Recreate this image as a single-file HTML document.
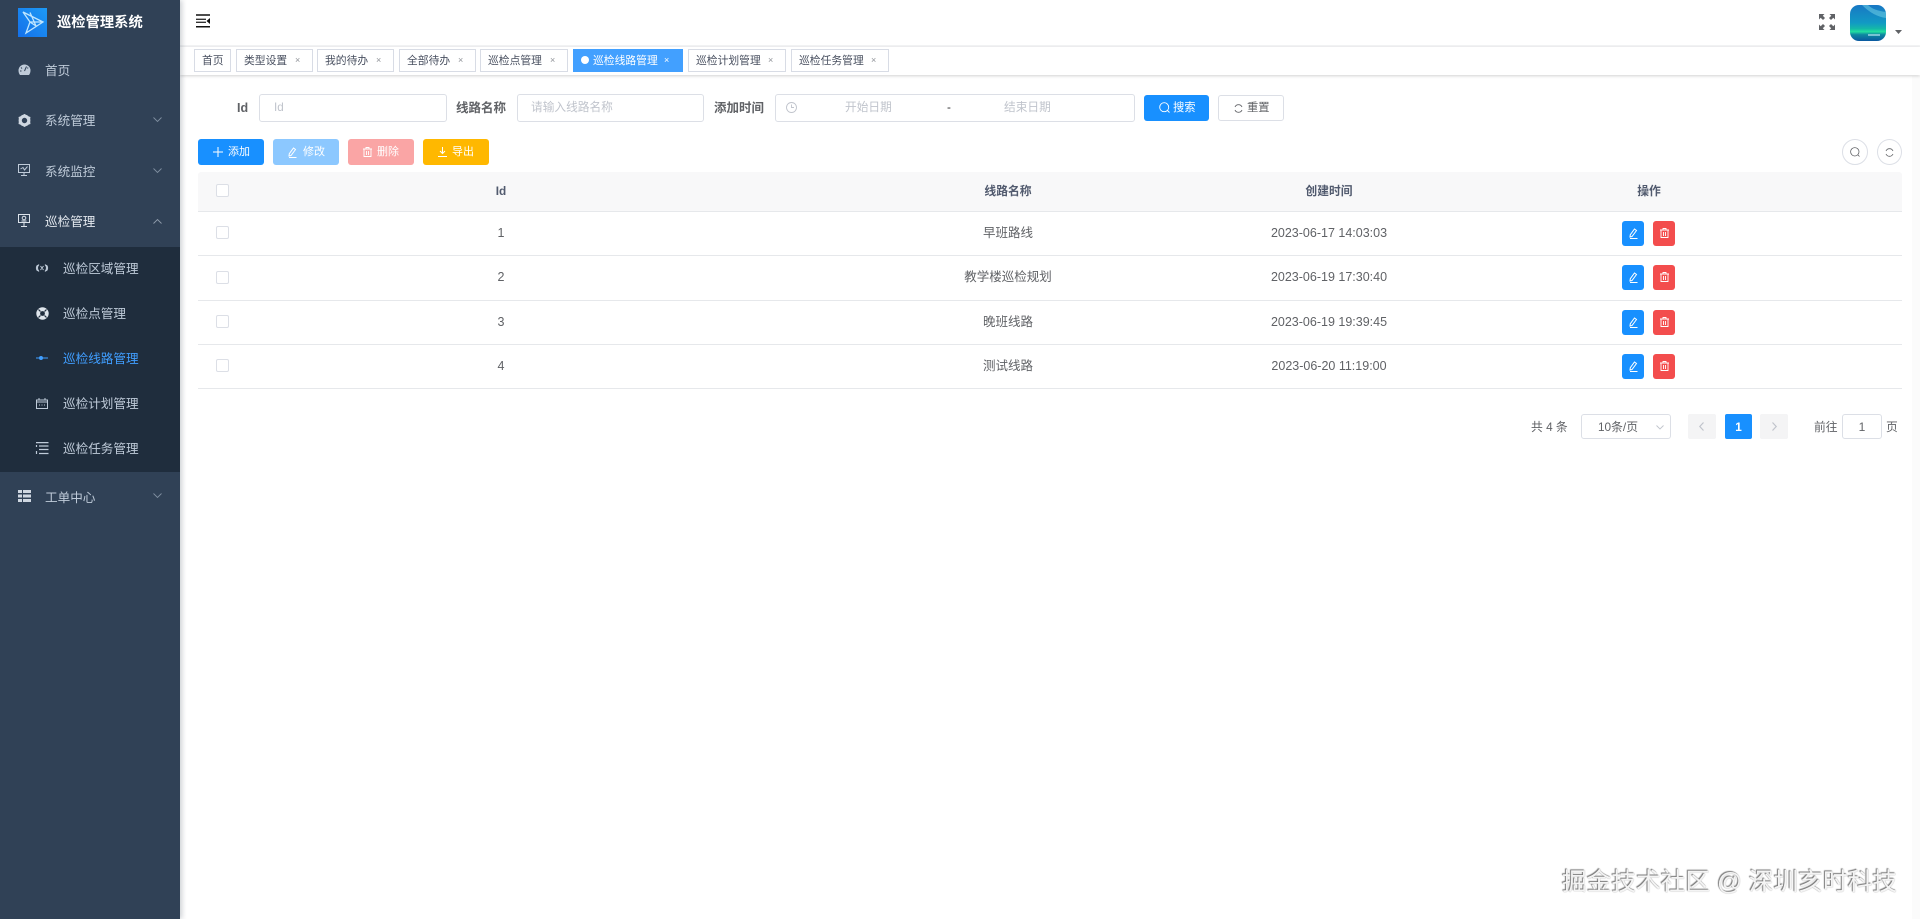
<!DOCTYPE html>
<html lang="zh-CN"><head><meta charset="utf-8"><title>巡检管理系统</title>
<style>
*{box-sizing:border-box}
html,body{margin:0;padding:0;width:1920px;height:919px;overflow:hidden;background:#fff;font-family:"Liberation Sans","Noto Sans CJK SC",sans-serif;color:#606266}
#w{position:absolute;left:0;top:0;width:1920px;height:919px;overflow:hidden;filter:blur(.35px)}
.a{position:absolute;white-space:nowrap}
svg{position:absolute;display:block;fill:none;overflow:visible}
.m{font-size:12.6px;color:#bfcbd9;left:45px;line-height:20px;height:20px;margin-top:1px}
.s{font-size:12.6px;color:#bfcbd9;left:63px;line-height:20px;height:20px;margin-top:1px}
.tag{top:49px;height:23px;border:1px solid #d8dce5;background:#fff;font-size:10.8px;line-height:23px;color:#495060;padding-left:7px}
.tag i{position:absolute;top:-1px;font-style:normal;font-size:9px;color:#909399}
.lb{top:98px;font-size:12.5px;font-weight:700;color:#606266;line-height:20px}
.in{top:94px;height:28px;border:1px solid #dcdfe6;border-radius:3px;background:#fff}
.ph{top:98px;font-size:11.7px;line-height:20px;color:#c0c4cc}
.btn{top:139px;width:66px;height:26px;border-radius:3px;color:#fff;font-size:11px;line-height:27px;padding-left:30px}
.th{top:181px;font-size:11.8px;line-height:20px;font-weight:700;color:#515a6e;text-align:center}
.td{font-size:12.5px;line-height:20px;color:#606266;text-align:center}
.ln{left:198px;width:1704px;height:1px;background:#e6e8eb}
.cb{left:216px;width:13px;height:13px;border:1px solid #dcdfe6;border-radius:2px;background:#fff}
.eb{left:1622px;width:22px;height:25px;border-radius:3px;background:#1890ff}
.db{left:1653px;width:22px;height:25px;border-radius:3px;background:#f34d4d}
.pg{font-size:11.8px;line-height:20px;color:#606266;top:417px}
</style></head><body><div id="w">

<div class="a" style="left:1912px;top:76px;width:8px;height:843px;background:#fbfbfb"></div>
<div class="a" style="left:180px;top:45px;width:1740px;height:2px;background:#f3f4f5"></div>
<div class="a" style="left:180px;top:47px;width:1740px;height:28px;background:#fff;box-shadow:0 1px 3px rgba(0,0,0,.18)"></div>

<div class="a" style="left:0;top:0;width:180px;height:919px;background:#304156;box-shadow:2px 0 5px rgba(0,21,41,.2)"></div>
<div class="a" style="left:0;top:247px;width:180px;height:225px;background:#1f2d3d"></div>

<div class="a" style="left:18px;top:8px;width:29px;height:29px;background:linear-gradient(45deg,#1470ea,#1d9af5)"></div>
<svg style="left:18px;top:8px" width="29" height="29" viewBox="0 0 29 29" stroke="#bfe6ff" stroke-width="1.300"><path d="M5 4L25 14L8 25L12 14ZM5 4L12 14L25 14M12 4.500L18 18M12 14L18 18"/></svg>
<div class="a" style="left:57px;top:13px;font-size:14.3px;font-weight:700;color:#fff;line-height:20px">巡检管理系统</div>

<svg style="left:18px;top:64px" width="13" height="12" viewBox="0 0 13 12"><path d="M6.500.5A6 6 0 0 0 .5 6.500C.5 8.500 1.200 10 2 11H11C11.800 10 12.500 8.500 12.500 6.500A6 6 0 0 0 6.500.5Z" fill="#bfcbd9"/><path d="M6.500 7L8.500 2.500M3 3.500L4 4.500M2 7H3.500M10 3.500L9.500 4.500" stroke="#304156"/></svg>
<div class="a m" style="top:60px">首页</div>

<svg style="left:18px;top:114px" width="13" height="13" viewBox="0 0 13 13"><circle cx="6.500" cy="6.500" r="4.300" stroke="#cfd7e1" stroke-width="3.200"/><circle cx="6.500" cy="1.200" r="1.200" fill="#cfd7e1"/><circle cx="6.500" cy="11.800" r="1.200" fill="#cfd7e1"/><circle cx="1.700" cy="3.800" r="1.200" fill="#cfd7e1"/><circle cx="11.300" cy="3.800" r="1.200" fill="#cfd7e1"/><circle cx="1.700" cy="9.200" r="1.200" fill="#cfd7e1"/><circle cx="11.300" cy="9.200" r="1.200" fill="#cfd7e1"/></svg>
<div class="a m" style="top:110px">系统管理</div>
<svg style="left:153px;top:117px" width="9" height="5" viewBox="0 0 9 5" stroke="#7f8ea0" stroke-width=".9"><path d="M.5.5L4.500 4.500L8.500.5"/></svg>

<svg style="left:18px;top:164px" width="12" height="12" viewBox="0 0 12 12" stroke="#bfcbd9"><path d="M.5.500H11.500V8.500H.5ZM6 8.500V11.500M3 11.500H9M2.500 5L5 3.500L6.500 6L9.500 2.500"/></svg>
<div class="a m" style="top:161px">系统监控</div>
<svg style="left:153px;top:168px" width="9" height="5" viewBox="0 0 9 5" stroke="#7f8ea0" stroke-width=".9"><path d="M.5.5L4.500 4.500L8.500.5"/></svg>

<svg style="left:18px;top:214px" width="12" height="13" viewBox="0 0 12 13" stroke="#dbe2ea"><path d="M.5.500H11.500V8.500H.5ZM6 8.500V12.500M3 12.500H9M3.500 7H8.500"/><circle cx="6" cy="4" r="1.800"/></svg>
<div class="a m" style="top:211px;color:#e4e9ef">巡检管理</div>
<svg style="left:153px;top:219px" width="9" height="5" viewBox="0 0 9 5" stroke="#8f9cab" stroke-width=".9"><path d="M.5 4.500L4.500.5L8.500 4.500"/></svg>

<svg style="left:36px;top:263px" width="12" height="10" viewBox="0 0 12 10" stroke="#bfcbd9"><path d="M3 1.500C1 3.500 1 6.500 3 8.500M9 1.500C11 3.500 11 6.500 9 8.500M1.500 2C0 4 0 6 1.500 8M10.500 2C12 4 12 6 10.500 8M4.500 3L7.500 7M7.500 3L4.500 7"/></svg>
<div class="a s" style="top:258px">巡检区域管理</div>

<svg style="left:36px;top:307px" width="13" height="13" viewBox="0 0 13 13"><circle cx="6.500" cy="6.500" r="4.300" stroke="#dfe5ec" stroke-width="3.800"/><path d="M2.500 2.500L4.500 4.500M10.500 2.500L8.500 4.500M2.500 10.500L4.500 8.500M10.500 10.500L8.500 8.500" stroke="#1f2d3d" stroke-width="1.200"/></svg>
<div class="a s" style="top:303px">巡检点管理</div>

<svg style="left:36px;top:355px" width="12" height="6" viewBox="0 0 12 6" stroke="#409eff"><path d="M0 3H12"/><circle cx="5" cy="3" r="1.500" fill="#409eff"/></svg>
<div class="a s" style="top:348px;color:#409eff">巡检线路管理</div>

<svg style="left:36px;top:398px" width="12" height="11" viewBox="0 0 12 11" stroke="#bfcbd9"><path d="M.5 2H11.500V10.500H.5ZM3 0V2M9 0V2M.5 4H11.500M3 7H4M5.500 7H6.500M8 7H9"/></svg>
<div class="a s" style="top:393px">巡检计划管理</div>

<svg style="left:36px;top:442px" width="13" height="13" viewBox="0 0 13 13" stroke="#bfcbd9" stroke-width="1.200"><path d="M0 .6H12.500M3 4H12.500M3 7.500H12.500M3 11.500H12.500M.5 3V5M.5 9V12"/></svg>
<div class="a s" style="top:438px">巡检任务管理</div>

<svg style="left:18px;top:490px" width="13" height="12" viewBox="0 0 13 12"><path d="M0 0H4V3H0ZM5 0H13V3H5ZM0 4.500H4V7.500H0ZM5 4.500H13V7.500H5ZM0 9H4V12H0ZM5 9H13V12H5Z" fill="#cfd7e1"/></svg>
<div class="a m" style="top:487px">工单中心</div>
<svg style="left:153px;top:493px" width="9" height="5" viewBox="0 0 9 5" stroke="#7f8ea0" stroke-width=".9"><path d="M.5.5L4.500 4.500L8.500.5"/></svg>

<svg style="left:196px;top:14px" width="14" height="14" viewBox="0 0 14 14"><path d="M0 1H14M0 12.800H14" stroke="#111" stroke-width="1.500"/><path d="M0 5.300H10M0 8.300H10" stroke="#333" stroke-width="1.400"/><path d="M14 4V10L10.500 7Z" fill="#111"/></svg>
<svg style="left:1819px;top:14px" width="16" height="16" viewBox="0 0 16 16"><path fill="#606266" d="M0 0H5.500L3.800 1.700L6 4L4 6L1.700 3.800L0 5.500ZM16 0V5.500L14.300 3.800L12 6L10 4L12.300 1.700L10.500 0ZM0 16V10.500L1.700 12.200L4 10L6 12L3.800 14.300L5.500 16ZM16 16H10.500L12.200 14.300L10 12L12 10L14.300 12.200L16 10.500Z"/></svg>
<svg style="left:1850px;top:5px" width="36" height="36" viewBox="0 0 36 36"><defs><linearGradient id="av" x1="0" y1="0" x2="0" y2="1"><stop offset="0" stop-color="#1877c4"/><stop offset=".5" stop-color="#129ac4"/><stop offset=".66" stop-color="#14b8a8"/><stop offset=".74" stop-color="#22e0a0"/><stop offset=".82" stop-color="#0f8aa0"/><stop offset="1" stop-color="#0a58a0"/></linearGradient><clipPath id="avc"><rect width="36" height="36" rx="9"/></clipPath></defs><g clip-path="url(#avc)"><rect width="36" height="36" fill="url(#av)"/><path d="M12 0C20 8 28 12 36 13V7C28 6 22 4 18 0Z" fill="#6fcfe6" opacity=".55"/><path d="M18 29H30V31H18Z" fill="#bfe9f5" opacity=".6"/></g></svg>
<svg style="left:1895px;top:30px" width="7" height="5" viewBox="0 0 7 5"><path d="M0 0H7L3.500 4Z" fill="#606266"/></svg>

<div class="a tag" style="left:194px;width:37px">首页</div>
<div class="a tag" style="left:236px;width:77px">类型设置<i style="left:58px">×</i></div>
<div class="a tag" style="left:317px;width:77px">我的待办<i style="left:58px">×</i></div>
<div class="a tag" style="left:399px;width:77px">全部待办<i style="left:58px">×</i></div>
<div class="a tag" style="left:480px;width:88px">巡检点管理<i style="left:69px">×</i></div>
<div class="a tag" style="left:573px;width:110px;background:#42a0ff;border-color:#42a0ff;color:#fff;padding-left:19px">巡检线路管理<i style="left:90px;color:#fff">×</i><span class="a" style="left:7px;top:6px;width:8px;height:8px;border-radius:50%;background:#fff"></span></div>
<div class="a tag" style="left:688px;width:98px">巡检计划管理<i style="left:79px">×</i></div>
<div class="a tag" style="left:791px;width:98px">巡检任务管理<i style="left:79px">×</i></div>

<div class="a lb" style="left:237px">Id</div>
<div class="a in" style="left:259px;width:188px"></div>
<div class="a ph" style="left:274px">Id</div>
<div class="a lb" style="left:456px">线路名称</div>
<div class="a in" style="left:517px;width:187px"></div>
<div class="a ph" style="left:531px">请输入线路名称</div>
<div class="a lb" style="left:714px">添加时间</div>
<div class="a in" style="left:775px;width:360px"></div>
<svg style="left:786px;top:102px" width="11" height="11" viewBox="0 0 11 11" stroke="#c0c4cc" stroke-width=".9"><circle cx="5.500" cy="5.500" r="5"/><path d="M5.500 2.500V5.500H8"/></svg>
<div class="a ph" style="left:845px">开始日期</div>
<div class="a" style="left:947px;top:98px;font-size:11.7px;line-height:20px;color:#303133">-</div>
<div class="a ph" style="left:1004px">结束日期</div>

<div class="a" style="left:1144px;top:95px;width:65px;height:26px;border-radius:3px;background:#1890ff"></div>
<svg style="left:1159px;top:102px" width="11" height="11" viewBox="0 0 11 11" stroke="#fff" stroke-width=".9"><circle cx="5.200" cy="5.200" r="4.500"/><path d="M8.500 8.500L10.500 10.500"/></svg>
<div class="a" style="left:1173px;top:98px;font-size:11.300px;line-height:20px;color:#fff">搜索</div>
<div class="a" style="left:1218px;top:95px;width:66px;height:26px;border:1px solid #dcdfe6;border-radius:3px;background:#fff"></div>
<svg style="left:1234px;top:104px" width="9" height="9" viewBox="0 0 9 9" stroke="#606266" stroke-width=".9"><path d="M1 3A3.800 3.800 0 0 1 8 3M8 6A3.800 3.800 0 0 1 1 6"/></svg>
<div class="a" style="left:1247px;top:98px;font-size:11.300px;line-height:20px;color:#606266">重置</div>

<div class="a btn" style="left:198px;background:#1890ff">添加</div>
<svg style="left:213px;top:147px" width="10" height="10" viewBox="0 0 10 10" stroke="#fff"><path d="M5 0V10M0 5H10"/></svg>
<div class="a btn" style="left:273px;background:#8cc8ff">修改</div>
<svg style="left:288px;top:147px" width="9" height="11" viewBox="0 0 9 11" stroke="#fff"><path d="M5.500 1L7.500 2.500L3 8.500L1 9L1.300 6.700ZM1 10.500H8.500"/></svg>
<div class="a btn" style="left:348px;background:#faa5a5;padding-left:29px">删除</div>
<svg style="left:363px;top:147px" width="9" height="10" viewBox="0 0 9 10" stroke="#fff" stroke-width=".9"><path d="M0 2H9M3 2V.5H6V2M1 2V9.500H8V2M3.500 4V8M5.500 4V8"/></svg>
<div class="a btn" style="left:423px;background:#ffb800;padding-left:29px">导出</div>
<svg style="left:438px;top:147px" width="9" height="10" viewBox="0 0 9 10" stroke="#fff"><path d="M4.500 0V6.500M2 4L4.500 6.500L7 4M0 9.500H9"/></svg>

<div class="a" style="left:1842px;top:139px;width:26px;height:26px;border:1px solid #dcdfe6;border-radius:50%;background:#fff"></div>
<svg style="left:1850px;top:147px" width="10" height="10" viewBox="0 0 10 10" stroke="#606266" stroke-width=".8"><circle cx="4.800" cy="4.800" r="4.200"/><path d="M8 8L9.500 9.500"/></svg>
<div class="a" style="left:1877px;top:139px;width:25px;height:26px;border:1px solid #dcdfe6;border-radius:50%;background:#fff"></div>
<svg style="left:1885px;top:148px" width="9" height="9" viewBox="0 0 9 9" stroke="#606266" stroke-width=".8"><path d="M1 3A3.800 3.800 0 0 1 8 3M8 6A3.800 3.800 0 0 1 1 6"/></svg>

<div class="a" style="left:198px;top:172px;width:1704px;height:39px;background:#f8f8f9;border-radius:3px 3px 0 0"></div>
<div class="a ln" style="top:211px"></div>
<div class="a ln" style="top:255px"></div>
<div class="a ln" style="top:300px"></div>
<div class="a ln" style="top:344px"></div>
<div class="a ln" style="top:388px"></div>

<div class="a cb" style="top:184px"></div>
<div class="a cb" style="top:226px"></div>
<div class="a cb" style="top:271px"></div>
<div class="a cb" style="top:315px"></div>
<div class="a cb" style="top:359px"></div>

<div class="a th" style="left:451px;width:100px">Id</div>
<div class="a th" style="left:958px;width:100px">线路名称</div>
<div class="a th" style="left:1279px;width:100px">创建时间</div>
<div class="a th" style="left:1599px;width:100px">操作</div>

<div class="a td" style="left:451px;width:100px;top:223px">1</div>
<div class="a td" style="left:908px;width:200px;top:223px">早班路线</div>
<div class="a td" style="left:1229px;width:200px;top:223px">2023-06-17 14:03:03</div>
<div class="a td" style="left:451px;width:100px;top:267px">2</div>
<div class="a td" style="left:908px;width:200px;top:267px">教学楼巡检规划</div>
<div class="a td" style="left:1229px;width:200px;top:267px">2023-06-19 17:30:40</div>
<div class="a td" style="left:451px;width:100px;top:312px">3</div>
<div class="a td" style="left:908px;width:200px;top:312px">晚班线路</div>
<div class="a td" style="left:1229px;width:200px;top:312px">2023-06-19 19:39:45</div>
<div class="a td" style="left:451px;width:100px;top:356px">4</div>
<div class="a td" style="left:908px;width:200px;top:356px">测试线路</div>
<div class="a td" style="left:1229px;width:200px;top:356px">2023-06-20 11:19:00</div>

<div class="a eb" style="top:221px"></div><div class="a db" style="top:221px"></div>
<div class="a eb" style="top:265px"></div><div class="a db" style="top:265px"></div>
<div class="a eb" style="top:310px"></div><div class="a db" style="top:310px"></div>
<div class="a eb" style="top:354px"></div><div class="a db" style="top:354px"></div>

<svg style="left:1629px;top:228px" width="9" height="11" viewBox="0 0 9 11" stroke="#fff"><path d="M5.500 1L7.500 2.500L3 8.500L1 9L1.300 6.700ZM1 10.500H8.500"/></svg>
<svg style="left:1629px;top:272px" width="9" height="11" viewBox="0 0 9 11" stroke="#fff"><path d="M5.500 1L7.500 2.500L3 8.500L1 9L1.300 6.700ZM1 10.500H8.500"/></svg>
<svg style="left:1629px;top:317px" width="9" height="11" viewBox="0 0 9 11" stroke="#fff"><path d="M5.500 1L7.500 2.500L3 8.500L1 9L1.300 6.700ZM1 10.500H8.500"/></svg>
<svg style="left:1629px;top:361px" width="9" height="11" viewBox="0 0 9 11" stroke="#fff"><path d="M5.500 1L7.500 2.500L3 8.500L1 9L1.300 6.700ZM1 10.500H8.500"/></svg>
<svg style="left:1660px;top:228px" width="9" height="10" viewBox="0 0 9 10" stroke="#fff" stroke-width=".9"><path d="M0 2H9M3 2V.5H6V2M1 2V9.500H8V2M3.500 4V8M5.500 4V8"/></svg>
<svg style="left:1660px;top:272px" width="9" height="10" viewBox="0 0 9 10" stroke="#fff" stroke-width=".9"><path d="M0 2H9M3 2V.5H6V2M1 2V9.500H8V2M3.500 4V8M5.500 4V8"/></svg>
<svg style="left:1660px;top:317px" width="9" height="10" viewBox="0 0 9 10" stroke="#fff" stroke-width=".9"><path d="M0 2H9M3 2V.5H6V2M1 2V9.500H8V2M3.500 4V8M5.500 4V8"/></svg>
<svg style="left:1660px;top:361px" width="9" height="10" viewBox="0 0 9 10" stroke="#fff" stroke-width=".9"><path d="M0 2H9M3 2V.5H6V2M1 2V9.500H8V2M3.500 4V8M5.500 4V8"/></svg>

<div class="a pg" style="left:1531px">共 4 条</div>
<div class="a" style="left:1581px;top:414px;width:90px;height:25px;border:1px solid #dcdfe6;border-radius:3px;background:#fff"></div>
<div class="a pg" style="left:1598px">10条/页</div>
<svg style="left:1656px;top:425px" width="8" height="5" viewBox="0 0 8 5" stroke="#c0c4cc" stroke-width=".9"><path d="M.5.5L4 4L7.500.5"/></svg>
<div class="a" style="left:1688px;top:414px;width:28px;height:25px;border-radius:2px;background:#f4f4f5"></div>
<svg style="left:1699px;top:422px" width="5" height="9" viewBox="0 0 5 9" stroke="#c0c4cc" stroke-width="1.200"><path d="M4.500.5L.8 4.500L4.500 8.500"/></svg>
<div class="a" style="left:1725px;top:414px;width:27px;height:25px;border-radius:2px;background:#1890ff;color:#fff;font-size:11.800px;font-weight:700;line-height:26px;text-align:center">1</div>
<div class="a" style="left:1760px;top:414px;width:28px;height:25px;border-radius:2px;background:#f4f4f5"></div>
<svg style="left:1772px;top:422px" width="5" height="9" viewBox="0 0 5 9" stroke="#c0c4cc" stroke-width="1.200"><path d="M.5.5L4.200 4.500L.5 8.500"/></svg>
<div class="a pg" style="left:1814px">前往</div>
<div class="a" style="left:1842px;top:414px;width:40px;height:25px;border:1px solid #dcdfe6;border-radius:3px;background:#fff;font-size:12px;line-height:25px;text-align:center;color:#606266">1</div>
<div class="a pg" style="left:1886px">页</div>

<div class="a" style="left:1562px;top:868px;font-size:24.7px;line-height:30px;color:#f4f4f4;text-shadow:-1px -1px 1px #777,0 0 1px #999">掘金技术社区 @ 深圳亥时科技</div>
</div></body></html>
